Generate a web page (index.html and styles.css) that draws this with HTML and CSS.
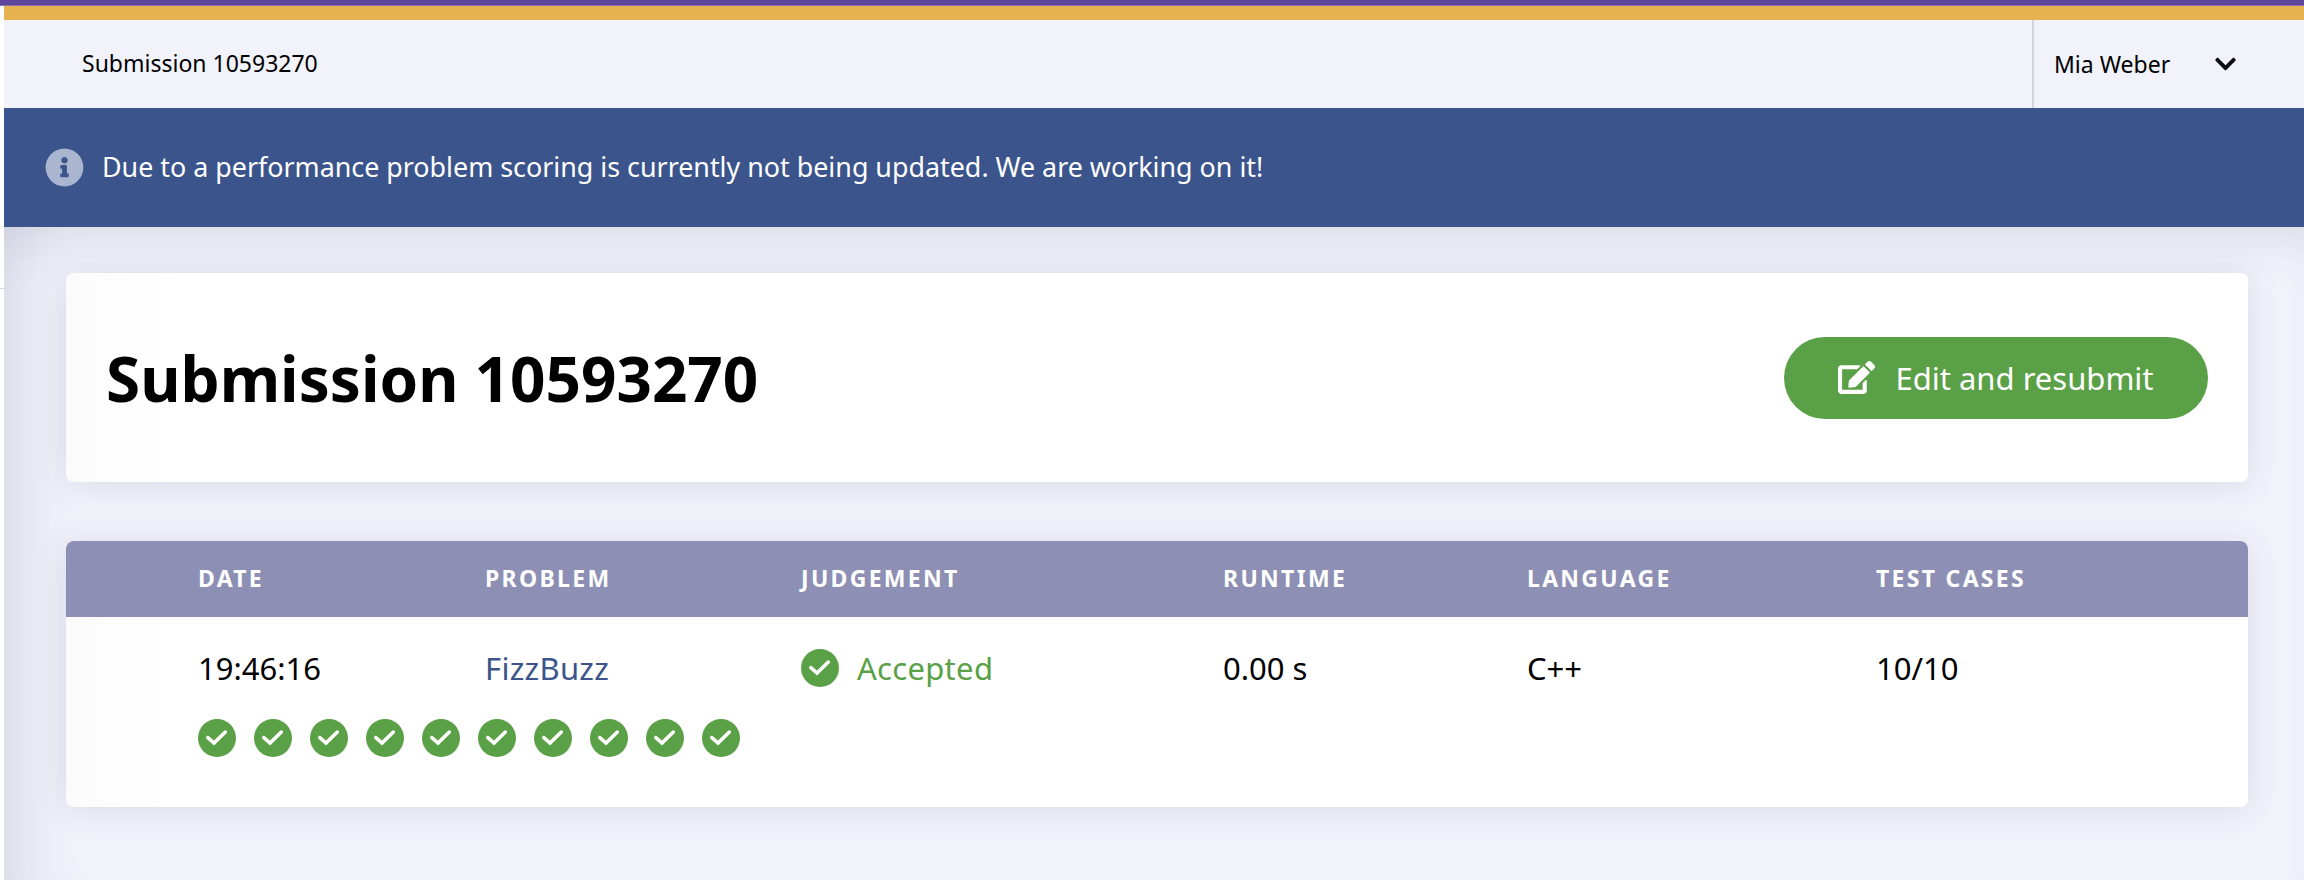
FILE: index.html
```html
<!DOCTYPE html>
<html lang="en">
<head>
  <meta charset="UTF-8" />
  <title>Submission 10593270</title>
  <link rel="stylesheet" href="styles.css">
</head>
<body>
  <svg class="defs" width="0" height="0">
    <symbol id="check" viewBox="0 0 512 512">
      <circle class="ok-disc" cx="256" cy="256" r="256"/>
      <path class="ok-mark" d="M132 252l84 72 152-148"/>
    </symbol>
  </svg>

  <div class="top-stripe"></div>
  <div class="edge-tick"></div>

  <div class="page">
    <div class="topbar">
      <div class="crumb">Submission 10593270</div>
      <div class="user">
        <span>Mia Weber</span>
        <svg class="chevron" viewBox="0 0 448 512"><path d="M207.029 381.476L12.686 187.132c-9.373-9.373-9.373-24.569 0-33.941l22.667-22.667c9.357-9.357 24.522-9.375 33.901-.04L224 284.505l154.745-154.021c9.379-9.335 24.544-9.317 33.901.04l22.667 22.667c9.373 9.373 9.373 24.569 0 33.941L240.971 381.476c-9.373 9.372-24.569 9.372-33.942 0z"/></svg>
      </div>
    </div>

    <div class="banner">
      <svg class="info" viewBox="0 0 512 512"><path d="M256 8C119.043 8 8 119.083 8 256c0 136.997 111.043 248 248 248s248-111.003 248-248C504 119.083 392.957 8 256 8zm0 110c23.196 0 42 18.804 42 42s-18.804 42-42 42-42-18.804-42-42 18.804-42 42-42zm56 254c0 6.627-5.373 12-12 12h-88c-6.627 0-12-5.373-12-12v-24c0-6.627 5.373-12 12-12h12v-64h-12c-6.627 0-12-5.373-12-12v-24c0-6.627 5.373-12 12-12h64c6.627 0 12 5.373 12 12v100h12c6.627 0 12 5.373 12 12v24z"/></svg>
      <span>Due to a performance problem scoring is currently not being updated. We are working on it!</span>
    </div>

    <main class="content">
      <section class="card title-card">
        <h1>Submission 10593270</h1>
        <a class="btn" href="#">
          <svg class="btn-icon" viewBox="0 0 576 512"><path d="M402.6 83.2l90.2 90.2c3.8 3.8 3.8 10 0 13.8L274.4 405.6l-92.8 10.3c-12.4 1.4-22.9-9.1-21.5-21.5l10.3-92.8L388.8 83.2c3.8-3.8 10-3.8 13.8 0zm162-22.9l-48.8-48.8c-15.2-15.2-39.9-15.2-55.2 0l-35.4 35.4c-3.8 3.8-3.8 10 0 13.8l90.2 90.2c3.8 3.8 10 3.8 13.8 0l35.4-35.4c15.2-15.3 15.2-40 0-55.2zM384 346.2V448H64V128h229.8c3.2 0 6.2-1.3 8.5-3.5l40-40c7.6-7.6 2.2-20.5-8.5-20.5H48C21.5 64 0 85.5 0 112v352c0 26.5 21.5 48 48 48h352c26.5 0 48-21.5 48-48V306.2c0-10.7-12.9-16-20.5-8.5l-40 40c-2.2 2.3-3.5 5.3-3.5 8.5z"/></svg>
          <span>Edit and resubmit</span>
        </a>
      </section>

      <section class="card table-card">
        <div class="row head">
          <div>DATE</div>
          <div>PROBLEM</div>
          <div>JUDGEMENT</div>
          <div>RUNTIME</div>
          <div>LANGUAGE</div>
          <div>TEST CASES</div>
        </div>
        <div class="row body-row">
          <div>19:46:16</div>
          <div><a class="problem" href="#">FizzBuzz</a></div>
          <div class="judgement">
            <svg class="ok"><use href="#check"/></svg>
            <span>Accepted</span>
          </div>
          <div>0.00 s</div>
          <div>C++</div>
          <div>10/10</div>
        </div>
        <div class="cases">
          <svg class="ok"><use href="#check"/></svg>
          <svg class="ok"><use href="#check"/></svg>
          <svg class="ok"><use href="#check"/></svg>
          <svg class="ok"><use href="#check"/></svg>
          <svg class="ok"><use href="#check"/></svg>
          <svg class="ok"><use href="#check"/></svg>
          <svg class="ok"><use href="#check"/></svg>
          <svg class="ok"><use href="#check"/></svg>
          <svg class="ok"><use href="#check"/></svg>
          <svg class="ok"><use href="#check"/></svg>
        </div>
      </section>
    </main>
  </div>
</body>
</html>
```

FILE: styles.css
```css
* {
  box-sizing: border-box;
}
html, body {
  height: 100%;
}
body {
  margin: 0;
  background: #fff;
  color: #000;
  font-family: "Noto Sans", sans-serif;
  overflow: hidden;
}
.defs {
  position: absolute;
}
.top-stripe {
  height: 6px;
  background: #5f469c;
  border-bottom: 1px solid #8a6fa8;
}
.edge-tick {
  position: absolute;
  left: 0;
  top: 288px;
  width: 4px;
  height: 1px;
  background: #d4d5d8;
}
.page {
  margin-left: 4px;
  height: 874px;
  display: flex;
  flex-direction: column;
}

/* Top bar */
.topbar {
  height: 102px;
  flex: none;
  background: #f1f2fa;
  border-top: 14px solid #e6b24f;
  display: flex;
  justify-content: space-between;
}
.crumb {
  padding-left: 78px;
  font-size: 23px;
  line-height: 87px;
}
.user {
  width: 272px;
  border-left: 2px solid #d4d5d8;
  padding-left: 20px;
  display: flex;
  align-items: center;
  font-size: 23px;
}
.chevron {
  width: 21px;
  height: 24px;
  margin-left: 45px;
  fill: #0c0c12;
}

/* Banner */
.banner {
  height: 119px;
  flex: none;
  background: #3b548c;
  color: #fff;
  display: flex;
  align-items: center;
  padding: 0 0 2px 41px;
  font-size: 26.85px;
}
.info {
  width: 39px;
  height: 39px;
  margin: 2px 18px 0 0;
  fill: #aab6d0;
}

/* Main area */
.content {
  flex: 1;
  padding: 46px 56px 0 62px;
  background: #f1f2fa;
  box-shadow: inset 0 40px 50px -30px rgba(60, 60, 100, 0.12), inset 70px 0 60px -50px rgba(60, 60, 100, 0.12);
}
.card {
  background: linear-gradient(to right, #fbfbfb, #fff 110px);
  border-radius: 8px;
  box-shadow: 0 3px 34px rgba(60, 60, 110, 0.12);
}
.title-card {
  height: 209px;
  padding: 0 40px;
  display: flex;
  align-items: center;
  justify-content: space-between;
}
.title-card h1 {
  margin: 0;
  font-size: 62px;
  font-weight: 700;
}
.btn {
  width: 424px;
  height: 82px;
  border-radius: 41px;
  background: #5aa047;
  color: #fff;
  text-decoration: none;
  display: flex;
  align-items: center;
  justify-content: center;
  font-size: 31px;
}
.btn-icon {
  width: 37px;
  height: 33px;
  margin-right: 20px;
  fill: #fff;
}

/* Table */
.table-card {
  margin-top: 59px;
  height: 266px;
}
.row {
  display: grid;
  grid-template-columns: 287px 316px 422px 304px 349px 1fr;
  padding-left: 132px;
}
.head {
  height: 76px;
  padding-bottom: 2px;
  align-items: center;
  background: #8d8fb4;
  border-radius: 8px 8px 0 0;
  color: #fff;
  font-size: 23px;
  font-weight: 700;
  letter-spacing: 2.3px;
}
.body-row {
  padding-top: 31px;
  font-size: 31px;
  line-height: 40px;
  align-items: center;
}
.problem {
  color: #3b548c;
  text-decoration: none;
  letter-spacing: 0.3px;
}
.judgement {
  display: flex;
  align-items: center;
  color: #5aa047;
  letter-spacing: 0.3px;
}
.ok {
  width: 38px;
  height: 38px;
  flex: none;
}
.ok-disc {
  fill: #5aa047;
}
.ok-mark {
  fill: none;
  stroke: #fff;
  stroke-width: 48;
  stroke-linecap: round;
  stroke-linejoin: miter;
}
.judgement .ok {
  margin-right: 18px;
}
.cases {
  display: flex;
  gap: 18px;
  padding: 31px 0 0 132px;
}
```
